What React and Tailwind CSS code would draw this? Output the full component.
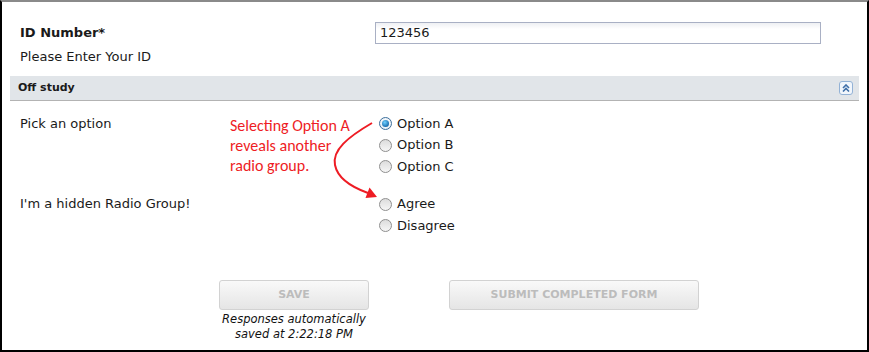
import React from "react";

function Radio({ checked }) {
  return (
    <span
      className={
        "inline-flex items-center justify-center w-[13px] h-[13px] rounded-full border shrink-0 " +
        (checked
          ? "border-[#3c6f9c] bg-[radial-gradient(circle_at_50%_40%,#ffffff,#dfe9f2)]"
          : "border-[#8f8f8f] bg-[linear-gradient(#dcdcdc,#f6f6f6)]")
      }
    >
      {checked && (
        <span className="w-[7px] h-[7px] rounded-full bg-[radial-gradient(circle_at_40%_35%,#6fd0ff,#1a6fb0_70%,#0d4a85)]" />
      )}
    </span>
  );
}

function Option({ label, checked }) {
  return (
    <div className="flex items-center h-[21.5px] gap-[5px] pl-[4px]">
      <Radio checked={checked} />
      <span>{label}</span>
    </div>
  );
}

export default function App() {
  return (
    <div
      className="relative w-[869px] h-[352px] bg-white border-2 border-black border-t-[#8a8a8a] text-[13px] text-[#1a1a1a] leading-[16px] overflow-hidden"
      style={{ fontFamily: '"DejaVu Sans", Verdana, sans-serif' }}
    >
      <div className="pt-[20px]">
        <div className="flex items-center h-[22px]">
          <div className="w-[373px] pl-[18px] font-bold">ID Number*</div>
          <div className="w-[446px] h-[22px] border border-[#a9b0c4] bg-[linear-gradient(#eef0f3,#ffffff_6px)] flex items-center pl-[4px]">
            123456
          </div>
        </div>
        <div className="mt-[5px] pl-[18px]">Please Enter Your ID</div>

        <div className="mt-[11px] mx-[8px] h-[25px] bg-[#e1e5e9] border-b border-[#b3b3b3] flex items-center justify-between pl-[8px] pr-[6px]">
          <span className="font-bold text-[11px]">Off study</span>
          <span className="w-[14px] h-[14px] rounded-[3px] border border-[#93b2d6] bg-[#f1f6fc] flex items-center justify-center">
            <svg width="8" height="8" viewBox="0 0 8 8" fill="none" stroke="#3f6fa8" strokeWidth="1.6">
              <path d="M1 4 L4 1 L7 4" />
              <path d="M1 7.5 L4 4.5 L7 7.5" />
            </svg>
          </span>
        </div>

        <div className="mt-[12px] flex">
          <div className="w-[373px] pl-[18px] h-[21.5px] flex items-center">Pick an option</div>
          <div>
            <Option label="Option A" checked />
            <Option label="Option B" />
            <Option label="Option C" />
          </div>
        </div>

        <div className="mt-[16px] flex">
          <div className="w-[373px] pl-[18px] h-[21.5px] flex items-center">I'm a hidden Radio Group!</div>
          <div>
            <Option label="Agree" />
            <Option label="Disagree" />
          </div>
        </div>

        <div className="mt-[43px] flex pl-[217px] gap-[80px]">
          <div className="flex flex-col items-center w-[150px]">
            <div className="w-[150px] h-[30px] rounded-[3px] border border-[#d2d2d2] bg-[linear-gradient(#f9f9f9,#e5e5e5)] flex items-center justify-center text-[11px] font-bold text-[#bcbcbc]">
              SAVE
            </div>
            <div className="mt-[2px] italic text-center text-[11.5px] leading-[15px] text-[#111] whitespace-nowrap">
              Responses automatically
              <br />
              saved at 2:22:18 PM
            </div>
          </div>
          <div className="w-[250px] h-[30px] rounded-[3px] border border-[#d2d2d2] bg-[linear-gradient(#f9f9f9,#e5e5e5)] flex items-center justify-center text-[11px] font-bold text-[#bcbcbc]">
            SUBMIT COMPLETED FORM
          </div>
        </div>
      </div>

      <div
        className="absolute left-[228px] top-[114px] text-[#ee1c24] text-[16px] leading-[20px]"
        style={{ fontFamily: 'Carlito, Lato, "Open Sans", sans-serif' }}
      >
        Selecting Option A
        <br />
        reveals another
        <br />
        radio group.
      </div>

      <svg className="absolute left-[-2px] top-[-2px] pointer-events-none" width="869" height="352">
        <path
          d="M372 123 C348 137 332 150 335 165 C338 180 354 188 368 193"
          fill="none"
          stroke="#ee1c24"
          strokeWidth="2"
        />
        <polygon points="377,197 365.5,198 369.5,187.5" fill="#ee1c24" />
      </svg>
    </div>
  );
}
